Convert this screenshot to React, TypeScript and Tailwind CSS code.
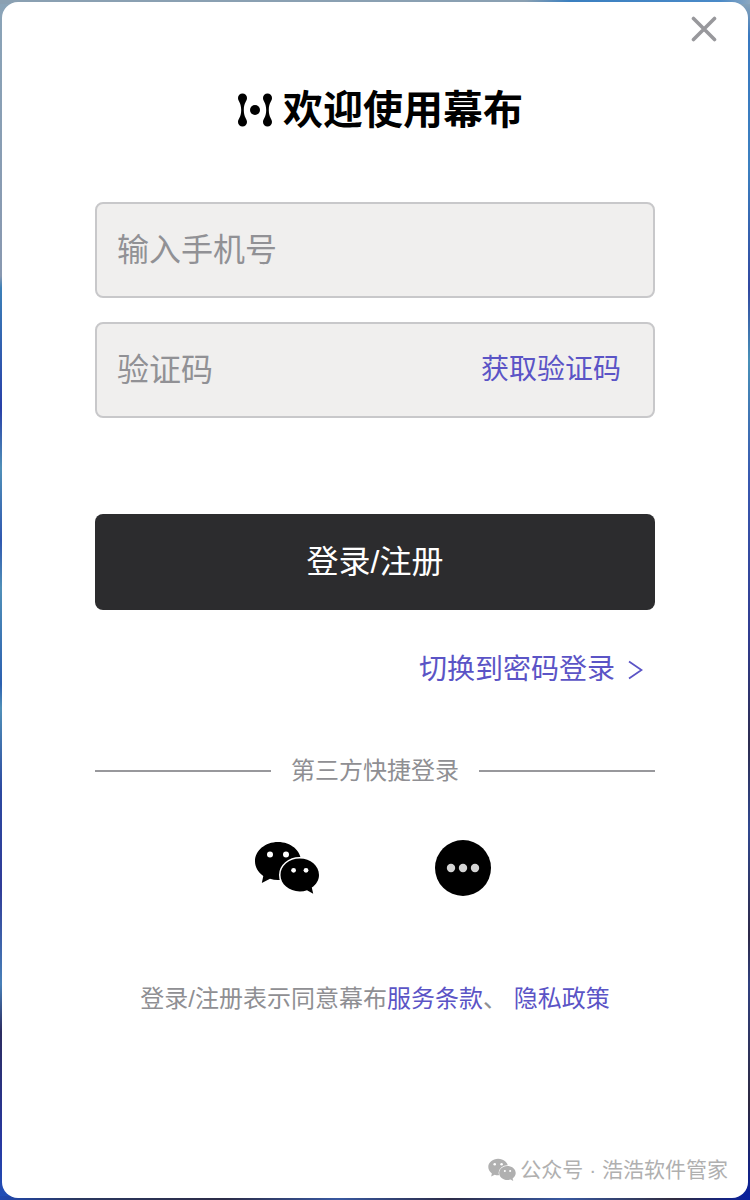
import React from "react";

const Logo = () => (
  <svg className="h-9 w-9" viewBox="0 0 36 36" fill="currentColor" aria-hidden="true">
    <path d="M5.5 1.4a4.5 4.5 0 0 1 4.5 4.600c0 3.200-3.200 4.600-3.200 12s3.200 8.800 3.200 12a4.500 4.500 0 0 1-9 0c0-3.200 3.200-4.600 3.200-12S1 9.200 1 6a4.500 4.500 0 0 1 4.500-4.600z" />
    <path d="M30.500 1.400a4.500 4.500 0 0 1 4.500 4.600c0 3.200-3.200 4.600-3.200 12s3.200 8.800 3.200 12a4.500 4.500 0 0 1-9 0c0-3.200 3.200-4.600 3.200-12s-3.200-8.800-3.200-12a4.500 4.500 0 0 1 4.500-4.600z" />
    <circle cx="18" cy="18" r="5" />
  </svg>
);

const WechatIcon = ({ className }: { className?: string }) => (
  <svg className={className} viewBox="0 0 64 56" fill="currentColor" aria-hidden="true">
    <path d="M23 2C10.300 2 0 10.600 0 21.200c0 6 3.200 11.200 8.300 14.700L6.800 43l8.200-4.200c2.500.8 5.200 1.200 8 1.200 12.700 0 23-8.200 23-18.800S35.700 2 23 2z" />
    <path
      d="M44.800 18.600c-10.800 0-19.300 7.300-19.300 16.400s8.500 16.400 19.300 16.400c2.600 0 5-.4 7.200-1.200l6.200 3.600-1.400-6.200c4.400-3 7.200-7.500 7.200-12.600 0-9.100-8.500-16.400-19.200-16.400z"
      stroke="white"
      strokeWidth="3"
      paintOrder="stroke"
    />
    <g fill="white">
      <circle cx="15" cy="14.400" r="3" />
      <circle cx="31" cy="14.400" r="3" />
      <circle cx="38.600" cy="30.300" r="2.400" />
      <circle cx="51" cy="30.300" r="2.400" />
    </g>
  </svg>
);

const MoreIcon = () => (
  <svg className="h-14 w-14" viewBox="0 0 56 56" aria-hidden="true">
    <circle cx="28" cy="28" r="28" fill="black" />
    <g fill="#d4d4d4">
      <circle cx="16" cy="28" r="4.200" />
      <circle cx="28" cy="28" r="4.200" />
      <circle cx="40" cy="28" r="4.200" />
    </g>
  </svg>
);

const inputBox =
  "flex h-24 items-center rounded-lg border-2 border-[#c8c8ca] bg-[#f0efee] px-5";
const inputText =
  "min-w-0 flex-1 bg-transparent text-[32px] leading-10 text-[#1f1f1f] outline-none placeholder:text-[#919195] placeholder:opacity-100";

const App = () => {
  return (
    <div className="flex min-h-screen bg-[linear-gradient(to_right,#8aa0b2_70%,#3a7fc0_76%,#4a8ac8_96%,#8ca8c0),linear-gradient(to_right,#2048b0,#2a3860_10%,#2c2c48_30%,#3858a0_45%,#2c2c48_60%,#3858a0_75%,#302c40_90%,#0820a0),linear-gradient(to_bottom,#8aa4b8,#8898b0_23%,#3c80b8_24%,#2840a8_34%,#5090b8_39%,#3058b0_45%,#5090b8_49%,#2c60b0_57%,#5090b8_59%,#2c48a0_66%,#303c98_74%,#4880b8_82%,#2c2c60_86%,#2838a0_95%,#2050b8),linear-gradient(to_bottom,#90a8b8,#3878c0_3%,#3c80c0_14%,#3048a0_24%,#4890b8_30%,#3858b0_40%,#303c90_53%,#2c2c50_62%,#304890_69%,#2c2848_78%,#304080_82%,#2c2840_92%,#0820a0)] bg-[length:100%_4px,100%_4px,50%_100%,50%_100%] bg-[position:top,bottom,left,right] bg-no-repeat p-0.5 font-['Liberation_Sans','Noto_Sans_CJK_SC',sans-serif]">
      <main className="flex flex-1 flex-col rounded-2xl bg-white">
        <div className="flex justify-end pt-3 pr-7">
          <button type="button" aria-label="关闭" className="p-0.5 text-[#98989c]">
            <svg
              className="h-7 w-7"
              viewBox="0 0 28 28"
              fill="none"
              stroke="currentColor"
              strokeWidth="3.600"
              strokeLinecap="round"
              aria-hidden="true"
            >
              <path d="M3.500 2.500l21 21M24.500 2.500l-21 21" />
            </svg>
          </button>
        </div>

        <div className="mx-auto flex w-full max-w-[600px] flex-1 flex-col px-5">
          <h1 className="mt-9 flex items-center justify-center gap-2.5 pl-2.5 text-[40px] leading-[56px] font-bold text-black">
            <Logo />
            欢迎使用幕布
          </h1>

          <form className="mt-16 flex flex-col" onSubmit={(e) => e.preventDefault()}>
            <div className={inputBox}>
              <input
                type="tel"
                aria-label="输入手机号"
                placeholder="输入手机号"
                className={inputText}
              />
            </div>
            <div className={`${inputBox} mt-6`}>
              <input
                type="text"
                aria-label="验证码"
                placeholder="验证码"
                className={inputText}
              />
              <button type="button" className="pr-3 text-[28px] leading-10 text-[#5b54c6]">
                获取验证码
              </button>
            </div>
            <button
              type="submit"
              className="mt-24 h-24 rounded-lg bg-[#2c2c2e] text-[32px] leading-10 text-white"
            >
              登录/注册
            </button>
          </form>

          <a
            href="#password"
            className="mt-10 flex items-center gap-3 self-end pr-3 text-[28px] leading-10 text-[#5b54c6]"
          >
            切换到密码登录
            <svg
              className="h-5 w-4"
              viewBox="0 0 16 20"
              fill="none"
              stroke="currentColor"
              strokeWidth="1.800"
              aria-hidden="true"
            >
              <path d="M2 1.500L14.500 10L2 18.500" />
            </svg>
          </a>

          <div className="mt-[65px] flex items-center gap-5 text-2xl leading-8 text-[#8f8f93]">
            <span className="h-0.5 flex-1 bg-[#98989c]" />
            第三方快捷登录
            <span className="h-0.5 flex-1 bg-[#98989c]" />
          </div>

          <div className="mt-[53px] flex items-center justify-center gap-28">
            <button type="button" aria-label="微信登录" className="text-black">
              <WechatIcon className="h-14 w-16" />
            </button>
            <button type="button" aria-label="更多" className="flex w-16 justify-center">
              <MoreIcon />
            </button>
          </div>

          <p className="mt-[87px] text-center text-2xl leading-8 text-[#8f8f93]">
            登录/注册表示同意幕布
            <a href="#terms" className="text-[#5b54c6]">
              服务条款
            </a>
            、{" "}
            <a href="#privacy" className="text-[#5b54c6]">
              隐私政策
            </a>
          </p>
        </div>

        <footer className="flex items-center justify-end gap-1 pr-5 pb-3 text-[21px] leading-8 text-[#b0b0b0]">
          <WechatIcon className="h-6 w-7" />
          公众号 · 浩浩软件管家
        </footer>
      </main>
    </div>
  );
};

export default App;
